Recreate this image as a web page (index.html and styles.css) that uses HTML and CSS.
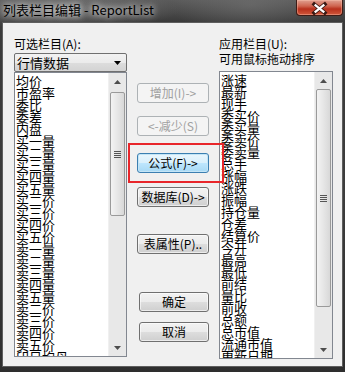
FILE: index.html
```html
<!DOCTYPE html>
<html lang="zh">
<head>
<meta charset="utf-8">
<link rel="stylesheet" href="styles.css">
</head>
<body>
<div class="window">
  <div class="titlebar">
    <span class="title">列表栏目编辑 - ReportList</span>
    <div class="close">
      <svg width="47" height="16" viewBox="0 0 47 16">
        <path d="M18 4 L29 13 M29 4 L18 13" stroke="#3a1a14" stroke-width="4" stroke-linecap="square"/>
        <path d="M18.5 4.5 L28.5 12.5 M28.5 4.5 L18.5 12.5" stroke="#ffffff" stroke-width="2.4"/>
      </svg>
    </div>
  </div>
  <div class="client">
    <div class="col left">
      <div class="label">可选栏目(A):</div>
      <div class="combo">
        <span>行情数据</span>
        <svg class="arrow" width="7" height="4" viewBox="0 0 7 4"><path d="M0 0 H7 L3.5 4 Z" fill="#000"/></svg>
      </div>
      <div class="listbox lb-left">
        <div class="items">
          <div>均价</div><div>市盈率</div><div>委比</div><div>委差</div><div>内盘</div>
          <div>买一量</div><div>买二量</div><div>买三量</div><div>买四量</div><div>买五量</div>
          <div>买二价</div><div>买三价</div><div>买四价</div><div>买五价</div>
          <div>卖一量</div><div>卖二量</div><div>卖三量</div><div>卖四量</div><div>卖五量</div>
          <div>卖二价</div><div>卖三价</div><div>卖四价</div><div>卖五价</div><div>印日均母</div>
        </div>
        <div class="vscroll">
          <div class="sbtn"><svg width="7" height="4" viewBox="0 0 7 4"><path d="M0 4 H7 L3.5 0 Z" fill="#4d4d4d"/></svg></div>
          <div class="track">
            <div class="thumb thumb-left"><span class="grip"></span></div>
          </div>
          <div class="sbtn"><svg width="7" height="4" viewBox="0 0 7 4"><path d="M0 0 H7 L3.5 4 Z" fill="#4d4d4d"/></svg></div>
        </div>
      </div>
    </div>
    <div class="col mid">
      <button class="btn disabled b-add">增加(I)-&gt;</button>
      <button class="btn disabled b-del">&lt;-减少(S)</button>
      <button class="btn focus b-formula">公式(F)-&gt;</button>
      <button class="btn b-db">数据库(D)-&gt;</button>
      <button class="btn b-prop">表属性(P)..</button>
      <button class="btn b-ok">确定</button>
      <button class="btn b-cancel">取消</button>
    </div>
    <div class="col right">
      <div class="label">应用栏目(U):</div>
      <div class="label">可用鼠标拖动排序</div>
      <div class="listbox lb-right">
        <div class="items">
          <div>涨速</div><div>最新</div><div>现手</div><div>委买价</div><div>委买量</div>
          <div>委卖价</div><div>委卖量</div><div>总手</div><div>涨幅</div><div>涨跌</div>
          <div>振幅</div><div>持仓量</div><div>仓差</div><div>结算价</div><div>今开</div>
          <div>最高</div><div>最低</div><div>前结</div><div>量比</div><div>前收</div>
          <div>总额</div><div>总市值</div><div>流通市值</div><div>更新日期</div>
        </div>
        <div class="vscroll">
          <div class="sbtn"><svg width="7" height="4" viewBox="0 0 7 4"><path d="M0 4 H7 L3.5 0 Z" fill="#4d4d4d"/></svg></div>
          <div class="track">
            <div class="thumb thumb-right"><span class="grip"></span></div>
          </div>
          <div class="sbtn"><svg width="7" height="4" viewBox="0 0 7 4"><path d="M0 0 H7 L3.5 4 Z" fill="#4d4d4d"/></svg></div>
        </div>
      </div>
    </div>
    <div class="highlight"></div>
  </div>
</div>
</body>
</html>
```
FILE: styles.css
```css
html, body {
  margin: 0;
  padding: 0;
}
body {
  width: 345px;
  height: 372px;
  overflow: hidden;
  background: #333;
  font-family: "Noto Sans CJK SC", "Noto Sans", sans-serif;
}
.window {
  width: 345px;
  height: 372px;
  display: flex;
  flex-direction: column;
  background:
    radial-gradient(ellipse 120px 20px at 60px 10px, rgba(140,140,140,0.55), rgba(140,140,140,0) 100%),
    radial-gradient(ellipse 80px 30px at 250px 5px, rgba(120,120,120,0.5), rgba(120,120,120,0) 100%),
    linear-gradient(to bottom, #5b5b5b 0px, #3a3a3a 22px, #3c3c3c 200px, #2e2e2e 372px);
}
.titlebar {
  height: 22px;
  display: flex;
  align-items: flex-start;
  justify-content: space-between;
  flex-shrink: 0;
}
.title {
  font-size: 13px;
  line-height: 20px;
  margin-left: 3px;
  color: #000;
  text-shadow: 0 0 6px rgba(255,255,255,0.9), 0 0 10px rgba(255,255,255,0.6);
  letter-spacing: 0;
}
.close {
  width: 47px;
  height: 16px;
  margin-right: 2px;
  border: 1px solid #3e1c16;
  border-top: none;
  border-radius: 0 0 4px 4px;
  box-sizing: border-box;
  background: linear-gradient(to bottom, #e0a090 0%, #cf6550 40%, #b8301c 60%, #d0583c 100%);
  box-shadow: inset 0 0 0 1px rgba(255,200,180,0.4);
  display: flex;
}
.close svg { display: block; }
.client {
  position: relative;
  margin: 0 2px;
  height: 345px;
  box-sizing: border-box;
  border: 1px solid #5e5e5e;
  background: #f0f0f0;
  display: flex;
  padding: 13px 0 0 11px;
  font-size: 12px;
  color: #000;
}
.col {
  display: flex;
  flex-direction: column;
}
.left { width: 113px; }
.mid {
  width: 72px;
  margin-left: 10px;
  padding-top: 47px;
}
.right {
  width: 114px;
  margin-left: 10px;
}
.label {
  font-size: 12px;
  line-height: 15px;
  height: 15px;
  white-space: nowrap;
}
.combo {
  margin-top: 2px;
  height: 19px;
  box-sizing: border-box;
  border: 1px solid #707070;
  border-radius: 2px;
  background: linear-gradient(to bottom, #f2f2f2 0%, #ebebeb 50%, #dddddd 51%, #d3d3d3 100%);
  display: flex;
  align-items: center;
  justify-content: space-between;
  padding: 0 5px 0 2px;
  font-size: 13px;
  line-height: 17px;
}
.combo .arrow { display: block; }
.listbox {
  box-sizing: border-box;
  border: 1px solid #828790;
  background: #fff;
  display: flex;
  overflow: hidden;
}
.lb-left { height: 285px; }
.lb-right { height: 288px; margin-top: 5px; }
.items {
  flex: 1;
  overflow: hidden;
  padding: 2px 0 0 1px;
  font-size: 13px;
  line-height: 12px;
}
.items div {
  height: 12px;
  white-space: nowrap;
  overflow: visible;
}
.vscroll {
  width: 17px;
  display: flex;
  flex-direction: column;
  background: #e8e8e8;
  border-left: 1px solid #f0f0f0;
}
.sbtn {
  height: 17px;
  display: flex;
  align-items: center;
  justify-content: center;
  flex-shrink: 0;
}
.sbtn svg { display: block; }
.track {
  flex: 1;
  position: relative;
}
.thumb {
  margin: 0 1px;
  box-sizing: border-box;
  border: 1px solid #9a9a9a;
  border-radius: 2px;
  background: linear-gradient(to right, #f3f3f3 0%, #e6e6e6 50%, #d8d8d8 100%);
  display: flex;
  align-items: center;
  justify-content: center;
}
.thumb-left { margin-top: 2px; height: 124px; }
.thumb-right { margin-top: 0px; height: 218px; }
.grip {
  width: 7px;
  height: 7px;
  background: repeating-linear-gradient(to bottom, #555 0px, #555 1px, transparent 1px, transparent 2px);
}
.btn {
  display: block;
  width: 72px;
  height: 20px;
  box-sizing: border-box;
  border: 1px solid #707070;
  border-radius: 3px;
  background: linear-gradient(to bottom, #f2f2f2 0%, #ebebeb 50%, #dddddd 51%, #cfcfcf 100%);
  font-family: "Noto Sans CJK SC", "Noto Sans", sans-serif;
  font-size: 12px;
  line-height: 16px;
  padding: 0;
  color: #000;
  text-align: center;
  white-space: nowrap;
  box-shadow: inset 0 0 0 1px rgba(255,255,255,0.6);
}
.btn.disabled {
  border-color: #adb2b5;
  background: #f4f4f4;
  color: #a0a0a0;
  box-shadow: none;
}
.btn.focus {
  border-color: #3c7fb1;
  background: linear-gradient(to bottom, #eaf6fd 0%, #d9f0fc 50%, #bee6fd 51%, #a7d9f5 100%);
  box-shadow: inset 0 0 0 1px #c4e5f6;
}
.b-add { margin-top: 0; }
.b-del { margin-top: 13px; }
.b-formula { margin-top: 17px; }
.b-db { margin-top: 14px; }
.b-prop { margin-top: 27px; }
.b-ok { margin-top: 38px; width: 70px; margin-left: 2px; }
.b-cancel { margin-top: 10px; width: 70px; margin-left: 2px; }
.highlight {
  position: absolute;
  left: 125px;
  top: 120px;
  width: 96px;
  height: 40px;
  box-sizing: border-box;
  border: 2px solid #e8262b;
  pointer-events: none;
}
```
